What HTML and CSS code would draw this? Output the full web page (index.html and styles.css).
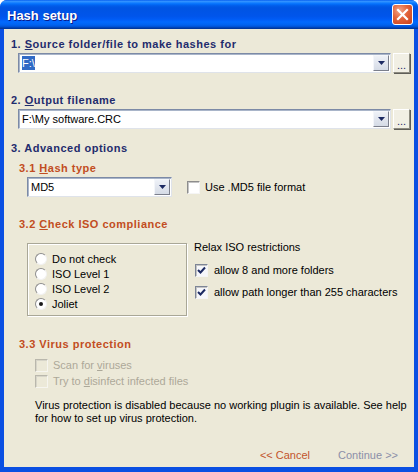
FILE: index.html
```html
<!DOCTYPE html>
<html>
<head>
    <title>Hash setup</title>
    <link rel="stylesheet" href="styles.css">
</head>
<body>
    <div class="window">
        <div class="titlebar">
            <span class="title">Hash setup</span>
            <span class="close-button">
                <svg width="13" height="13" viewBox="0 0 13 13"><path d="M2 2 L11 11 M11 2 L2 11" stroke="#fff" stroke-width="2.2" stroke-linecap="square"/></svg>
            </span>
        </div>

        <div class="client">
            <!-- 1. source -->
            <div class="heading">1. <u>S</u>ource folder/file to make hashes for</div>
            <div class="path-row">
                <div class="combo wide">
                    <span class="combo-value"><span class="selected">F:\</span></span>
                    <span class="drop"><svg width="7" height="4" viewBox="0 0 7 4"><path d="M0 0 H7 L3.5 4 Z" fill="#1c2a62"/></svg></span>
                </div>
                <span class="browse">...</span>
            </div>

            <!-- 2. output -->
            <div class="heading second">2. <u>O</u>utput filename</div>
            <div class="path-row">
                <div class="combo wide">
                    <span class="combo-value">F:\My software.CRC</span>
                    <span class="drop"><svg width="7" height="4" viewBox="0 0 7 4"><path d="M0 0 H7 L3.5 4 Z" fill="#1c2a62"/></svg></span>
                </div>
                <span class="browse">...</span>
            </div>

            <!-- 3. advanced -->
            <div class="heading third">3. Advanced options</div>

            <div class="subheading first">3.1 <u>H</u>ash type</div>
            <div class="hash-row">
                <div class="combo hash">
                    <span class="combo-value">MD5</span>
                    <span class="drop"><svg width="7" height="4" viewBox="0 0 7 4"><path d="M0 0 H7 L3.5 4 Z" fill="#1c2a62"/></svg></span>
                </div>
                <label class="check-line">
                    <span class="checkbox"></span>
                    <span>Use .MD5 file format</span>
                </label>
            </div>

            <div class="subheading">3.2 <u>C</u>heck ISO compliance</div>
            <div class="iso-row">
                <div class="group-box">
                    <div class="radio-line"><span class="radio"></span><span>Do not check</span></div>
                    <div class="radio-line"><span class="radio"></span><span>ISO Level 1</span></div>
                    <div class="radio-line"><span class="radio"></span><span>ISO Level 2</span></div>
                    <div class="radio-line"><span class="radio on"></span><span>Joliet</span></div>
                </div>
                <div class="relax">
                    <div class="relax-title">Relax ISO restrictions</div>
                    <div class="relax-line">
                        <span class="checkbox checked"><svg width="9" height="9" viewBox="0 0 9 9"><path d="M1 4 L3.5 6.5 L8 1.5" stroke="#1c2a62" stroke-width="2" fill="none"/></svg></span>
                        <span>allow 8 and more folders</span>
                    </div>
                    <div class="relax-line">
                        <span class="checkbox checked"><svg width="9" height="9" viewBox="0 0 9 9"><path d="M1 4 L3.5 6.5 L8 1.5" stroke="#1c2a62" stroke-width="2" fill="none"/></svg></span>
                        <span>allow path longer than 255 characters</span>
                    </div>
                </div>
            </div>

            <div class="subheading virus">3.3 Virus protection</div>
            <div class="virus-checks">
                <div class="disabled-line"><span class="checkbox disabled"></span><span>Scan for <u>v</u>iruses</span></div>
                <div class="disabled-line"><span class="checkbox disabled"></span><span>Try to <u>d</u>isinfect infected files</span></div>
            </div>
            <p class="note">Virus protection is disabled because no working plugin is available. See help<br>for how to set up virus protection.</p>

            <div class="actions">
                <span class="cancel">&lt;&lt; Cancel</span>
                <span class="continue">Continue &gt;&gt;</span>
            </div>
        </div>
    </div>
</body>
</html>
```

FILE: styles.css
```css
/* Whole page */
body {
    margin: 0;
    background-color: #ffffff;
    font-family: "Liberation Sans", Arial, sans-serif;
    font-size: 11px;
    color: #000000;
}

/* Window frame */
.window {
    width: 418px;
    height: 472px;
    box-sizing: border-box;
    border-radius: 7px 7px 0 0;
    background-color: #0a4fe2;
    display: flex;
    flex-direction: column;
    overflow: hidden;
}

/* Blue title bar */
.titlebar {
    height: 29px;
    flex-shrink: 0;
    display: flex;
    align-items: center;
    justify-content: space-between;
    padding: 0 5px 0 7px;
    background: linear-gradient(to bottom, #0058ee 0%, #3593ff 4%, #288eff 7%, #127dff 10%, #036ffc 14%, #0262ee 18%, #0057e5 24%, #0054e3 30%, #0055eb 56%, #005bf5 66%, #026afe 76%, #0062ef 86%, #0052d6 92%, #0040ab 96%, #003092 100%);
}

.title {
    color: #ffffff;
    font-weight: bold;
    font-size: 13px;
    text-shadow: 1px 1px 0 #0a1a8a;
    margin-top: 1px;
}

/* Red close button */
.close-button {
    width: 19px;
    height: 19px;
    border: 1px solid #ffffff;
    border-radius: 3px;
    background: radial-gradient(circle at 35% 30%, #f2a589 0%, #e2633a 45%, #c9401b 100%);
    display: flex;
    align-items: center;
    justify-content: center;
}

/* Grey dialog body */
.client {
    flex: 1;
    margin: 0 4px 5px 4px;
    background-color: #ece9d8;
    display: flex;
    flex-direction: column;
}

/* Numbered headings */
.heading {
    margin: 8px 0 0 7px;
    line-height: 14px;
    font-weight: bold;
    letter-spacing: 0.5px;
    color: #1f2c6d;
}

.heading.second {
    margin-top: 20px;
}

.heading.third {
    margin-top: 12px;
}

.subheading {
    margin: 20px 0 0 15px;
    line-height: 14px;
    font-weight: bold;
    letter-spacing: 0.5px;
    color: #c24d22;
}

.subheading.first {
    margin-top: 6px;
}

.subheading.virus {
    margin-top: 21px;
}

/* Path rows with combo and browse button */
.path-row {
    display: flex;
    gap: 2px;
    margin: 2px 4px 0 14px;
}

.combo {
    height: 20px;
    box-sizing: border-box;
    border: 1px solid;
    border-color: #7c8aa6 #dfe3ea #dfe3ea #7c8aa6;
    box-shadow: inset 1px 1px 0 #a9b5c9;
    background-color: #ffffff;
    display: flex;
    align-items: center;
}

.combo.wide {
    flex: 1;
}

.combo.hash {
    width: 145px;
}

.combo-value {
    flex: 1;
    padding-left: 3px;
    line-height: 14px;
}

.selected {
    background-color: #316ac5;
    color: #ffffff;
    padding: 1px 0;
}

.drop {
    width: 16px;
    height: 16px;
    margin-right: 1px;
    box-sizing: border-box;
    border: 1px solid;
    border-color: #f4f6fa #7b7f8c #7b7f8c #f4f6fa;
    background: linear-gradient(to bottom, #eef1f7, #d5dbe6);
    display: flex;
    align-items: center;
    justify-content: center;
}

.browse {
    width: 17px;
    height: 20px;
    box-sizing: border-box;
    border: 1px solid;
    border-color: #ffffff #8d8b80 #8d8b80 #ffffff;
    box-shadow: 1px 1px 0 #5f5e58;
    background-color: #f1efe4;
    display: flex;
    align-items: flex-end;
    justify-content: center;
    line-height: 13px;
    color: #1f2c6d;
}

/* Hash type row */
.hash-row {
    display: flex;
    align-items: center;
    gap: 15px;
    margin: 2px 0 0 23px;
}

.check-line {
    display: flex;
    align-items: center;
    gap: 5px;
}

/* Checkboxes */
.checkbox {
    width: 13px;
    height: 13px;
    box-sizing: border-box;
    border: 1px solid;
    border-color: #8d8d8d #f5f5f5 #f5f5f5 #8d8d8d;
    box-shadow: inset 1px 1px 0 #c4c4c4;
    background-color: #ffffff;
    display: flex;
    align-items: center;
    justify-content: center;
    flex-shrink: 0;
}

.checkbox.checked {
    border-color: #7d8596 #f5f5f5 #f5f5f5 #7d8596;
    background-color: #f6f7fb;
}

.checkbox.disabled {
    border-color: #b9b7ac #f6f5ef #f6f5ef #b9b7ac;
    box-shadow: inset 1px 1px 0 #d7d5c9;
    background-color: #ece9d8;
}

/* ISO compliance */
.iso-row {
    display: flex;
    gap: 7px;
    margin: 9px 0 0 23px;
}

.group-box {
    width: 160px;
    height: 73px;
    box-sizing: border-box;
    margin-top: 3px;
    padding: 7px 0 0 7px;
    border: 1px solid #a9a797;
    box-shadow: inset 1px 1px 0 #ffffff, 1px 1px 0 #ffffff;
}

.radio-line {
    display: flex;
    align-items: center;
    gap: 5px;
    height: 15px;
}

.radio {
    width: 12px;
    height: 12px;
    box-sizing: border-box;
    border-radius: 50%;
    border: 1px solid;
    border-color: #8d8d8d #f2f2f2 #f2f2f2 #8d8d8d;
    background-color: #ffffff;
    display: flex;
    align-items: center;
    justify-content: center;
}

.radio.on::after {
    content: "";
    width: 4px;
    height: 4px;
    border-radius: 50%;
    background-color: #1a1a1a;
}

.relax-title {
    line-height: 14px;
}

.relax-line {
    display: flex;
    align-items: center;
    gap: 6px;
    height: 22px;
    margin-left: 1px;
}

.relax-title + .relax-line {
    margin-top: 5px;
}

/* Virus protection */
.virus-checks {
    margin: 6px 0 0 31px;
    color: #aca899;
}

.disabled-line {
    display: flex;
    align-items: center;
    gap: 5px;
    height: 16px;
}

.note {
    margin: 10px 0 0 31px;
    line-height: 13px;
}

/* Bottom links */
.actions {
    display: flex;
    justify-content: flex-end;
    gap: 28px;
    margin: 23px 16px 0 0;
    line-height: 14px;
}

.cancel {
    color: #c2542c;
}

.continue {
    color: #8b8fa8;
}
```
